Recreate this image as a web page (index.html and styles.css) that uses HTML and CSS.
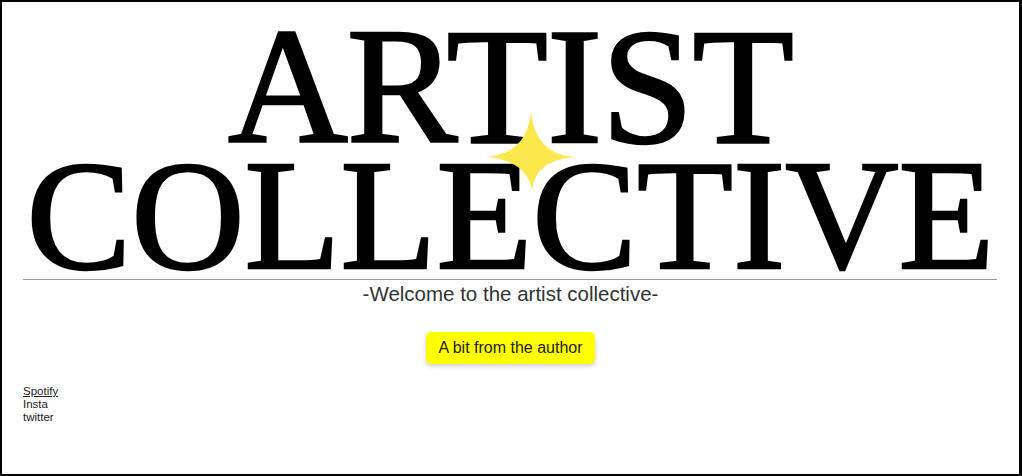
FILE: index.html
```html
<!DOCTYPE html>
<html lang="en">
<head>
  <meta charset="UTF-8" />
  <meta name="viewport" content="width=device-width, initial-scale=1.0" />
  <title>Artist Collective</title>
  <link rel="stylesheet" href="styles.css">
</head>
<body>
  <div class="frame">
    <header class="masthead">
      <h1 class="title">
        <span class="title-top">ARTIST</span>
        <span class="title-bottom">COLLECTIVE</span>
      </h1>
      <!-- little sparkle that sits between the two lines -->
      <svg class="sparkle" viewBox="0 0 86 78" xmlns="http://www.w3.org/2000/svg">
        <path d="M44 0 Q48 41 86 45 Q48 49 45 78 Q40 49 0 45 Q40 41 44 0Z" fill="#fbe84c"/>
      </svg>
    </header>

    <hr class="rule">

    <p class="welcome">-Welcome to the artist collective-</p>

    <div class="cta">
      <button class="author-btn">A bit from the author</button>
    </div>

    <ul class="socials">
      <li><a href="#">Spotify</a></li>
      <li>Insta</li>
      <li>twitter</li>
    </ul>
  </div>
</body>
</html>
```

FILE: styles.css
```css
html, body {
  margin: 0;
  padding: 0;
  background: white;
  color: black;
}

*,
*::before,
*::after {
  box-sizing: border-box;
}

.frame {
  height: 476px;
  border: 2px solid #000;
  border-right-width: 3px;
  overflow: hidden;
}

.masthead {
  position: relative;
}

.title {
  margin: 0;
  padding-top: 14px;
  text-align: center;
  font-family: "Liberation Serif", "Times New Roman", serif;
  font-weight: normal;
  color: #000;
  -webkit-text-stroke: 2.5px #000;
}

.title-top {
  display: block;
  font-size: 166px;
  line-height: 140px;
  letter-spacing: -1px;
}

.title-bottom {
  display: block;
  font-size: 157px;
  line-height: 118px;
}

.sparkle {
  position: absolute;
  left: 485px;
  top: 110px;
  width: 86px;
  height: 78px;
}

.rule {
  margin: 5px 22px 0 21px;
  height: 0;
  border: 0;
  border-top: 1px solid #9a9a9a;
}

.welcome {
  margin: 2px 0 0;
  text-align: center;
  font-family: "Liberation Sans", Arial, sans-serif;
  font-size: 20.5px;
  line-height: 24px;
  color: #333;
}

.cta {
  display: flex;
  justify-content: center;
  margin-top: 26px;
}

.author-btn {
  padding: 7px 12px;
  border: 0;
  border-radius: 5px;
  background: #ffff00;
  box-shadow: 0 2px 5px rgba(0, 0, 0, 0.2);
  font-family: "Liberation Sans", Arial, sans-serif;
  font-size: 16px;
  line-height: 18px;
  color: #222;
  cursor: pointer;
}

.socials {
  list-style: none;
  margin: 21px 0 0;
  padding: 0 0 0 21px;
  font-family: "Liberation Sans", Arial, sans-serif;
  font-size: 11.5px;
  line-height: 13px;
  color: #222;
}

.socials a {
  color: #222;
  text-decoration: underline;
}
```
